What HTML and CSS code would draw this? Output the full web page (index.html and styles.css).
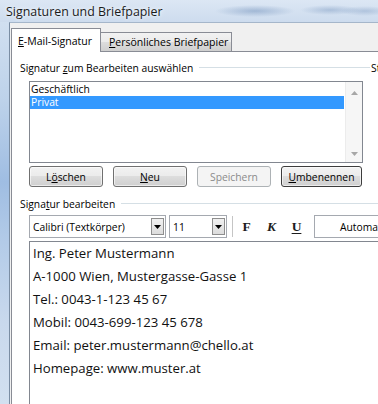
FILE: index.html
```html
<!DOCTYPE html>
<html lang="de">
<head>
<meta charset="utf-8">
<title>Signaturen und Briefpapier</title>
<link rel="stylesheet" href="styles.css">
</head>
<body>
<div class="window">
  <div class="titlebar"><span class="title">Signaturen und Briefpapier</span></div>
  <div class="frame">
    <div class="client">
      <div class="tabs">
        <div class="tab active"><u>E</u>-Mail-Signatur</div>
        <div class="tab"><u>P</u>ersönliches Briefpapier</div>
      </div>
      <div class="panel">
        <div class="top-row">
          <div class="sel-group">
            <div class="group-head"><span class="glabel">Signatur <u>z</u>um Bearbeiten auswählen</span><span class="rule"></span></div>
            <div class="listbox">
              <ul class="items">
                <li>Geschäftlich</li>
                <li class="selected">Privat</li>
              </ul>
              <div class="vscroll">
                <svg width="7" height="4" viewBox="0 0 7 4"><polygon points="0,4 3.5,0 7,4" fill="#a7a7a7"/></svg>
                <svg width="7" height="4" viewBox="0 0 7 4"><polygon points="0,0 3.5,4 7,0" fill="#a7a7a7"/></svg>
              </div>
            </div>
            <div class="buttons">
              <button class="btn">L<u>ö</u>schen</button>
              <button class="btn"><u>N</u>eu</button>
              <button class="btn" disabled>Speichern</button>
              <button class="btn focus wide"><u>U</u>mbenennen</button>
            </div>
          </div>
          <div class="std-group">
            <div class="group-head"><span class="glabel">Standardsignatur auswählen</span></div>
          </div>
        </div>
        <div class="edit-group">
          <div class="group-head"><span class="glabel">Signa<u>t</u>ur bearbeiten</span><span class="rule"></span></div>
          <div class="toolbar">
            <div class="combo font-combo">
              <span class="combo-text">Calibri (Textkörper)</span>
              <span class="drop"><svg width="7" height="4" viewBox="0 0 7 4"><polygon points="0,0 3.5,4 7,0" fill="#000"/></svg></span>
            </div>
            <div class="combo size-combo">
              <span class="combo-text">11</span>
              <span class="drop"><svg width="7" height="4" viewBox="0 0 7 4"><polygon points="0,0 3.5,4 7,0" fill="#000"/></svg></span>
            </div>
            <span class="tsep"></span>
            <span class="fmt bold">F</span>
            <span class="fmt italic">K</span>
            <span class="fmt under">U</span>
            <div class="combo color-combo"><span class="combo-text">Automatisch</span></div>
          </div>
          <div class="editor">
            <p>Ing. Peter Mustermann</p>
            <p>A-1000 Wien, Mustergasse-Gasse 1</p>
            <p>Tel.: 0043-1-123 45 67</p>
            <p>Mobil: 0043-699-123 45 678</p>
            <p>Email: peter.mustermann@chello.at</p>
            <p>Homepage: www.muster.at</p>
          </div>
        </div>
      </div>
    </div>
  </div>
</div>
</body>
</html>
```

FILE: styles.css
```css
* { box-sizing: border-box; }
html, body { margin: 0; padding: 0; }
body {
  width: 378px;
  height: 404px;
  overflow: hidden;
  font-family: "Open Sans", "Noto Sans", sans-serif;
  font-size: 10.3px;
  color: #000;
  background: #c5d6ea;
}
u { text-decoration: underline; text-underline-offset: 1px; }

.window {
  height: 404px;
  display: flex;
  flex-direction: column;
  background: linear-gradient(#d6e3f2, #bdd2ea 25%, #9fbde2 45%, #b3cbe8 60%, #c9d9ed 80%, #d2e0f0);
}
.titlebar {
  height: 22px;
  flex: none;
  display: flex;
  align-items: center;
  padding-left: 6px;
  background:
    radial-gradient(ellipse 40px 6px at 255px 11px, rgba(120,150,190,0.55), transparent),
    radial-gradient(ellipse 30px 5px at 330px 10px, rgba(120,150,190,0.45), transparent),
    radial-gradient(ellipse 25px 5px at 365px 11px, rgba(120,150,190,0.4), transparent),
    linear-gradient(#dce7f4, #cddcee);
}
.title {
  font-size: 12.4px;
  color: #1b1b1b;
  text-shadow: 0 0 5px #eef4fb, 0 0 3px #eef4fb;
}
.frame {
  flex: 1;
  display: flex;
  padding-left: 9px;
  min-height: 0;
}
.client {
  flex: 1;
  min-width: 0;
  background: #f0f0f0;
  border-left: 1px solid #7a8da3;
  border-top: 1px solid #a5b6ca;
  padding: 5px 0 0 1px;
  overflow: hidden;
}

/* tabs */
.tabs {
  display: flex;
  align-items: flex-end;
  height: 24px;
  margin-bottom: -1px;
}
.tab {
  height: 19px;
  width: 131px;
  margin-bottom: 1px;
  padding: 2px 0 0 8px;
  border: 1px solid #898c95;
  border-left: none;
  border-bottom: none;
  background: linear-gradient(#f2f2f2, #ebebeb 50%, #dddddd 50%, #cfcfcf);
  white-space: nowrap;
  font-size: 10.5px;
}
.tab.active {
  position: relative;
  z-index: 1;
  height: 24px;
  width: 90px;
  margin-bottom: 0;
  padding: 5px 0 0 6px;
  border-left: 1px solid #898c95;
  background: #fff;
}

/* panel */
.panel {
  width: 620px;
  height: 400px;
  background: #fff;
  border-top: 1px solid #898c95;
  border-left: 1px solid #898c95;
  padding: 8px 0 0 8px;
}
.top-row { display: flex; }
.sel-group { width: 350px; flex: none; }
.std-group { margin-left: 1px; white-space: nowrap; }
.group-head {
  display: flex;
  align-items: center;
  height: 15px;
  white-space: nowrap;
}
.rule {
  flex: 1;
  height: 1px;
  margin-left: 6px;
  background: #d5dfe5;
}

.listbox {
  margin: 6px 0 0 9px;
  width: 334px;
  height: 82px;
  border: 1px solid #828790;
  display: flex;
  padding-top: 1px;
}
.items {
  list-style: none;
  margin: 0;
  padding: 0;
  width: 314px;
  flex: none;
}
.items li {
  height: 13px;
  line-height: 13px;
  padding-left: 1px;
}
.items li.selected { background: #3399ff; color: #fff; }
.vscroll {
  margin-left: 1px;
  margin-top: -1px;
  flex: 1;
  background: #f6f6f6;
  border-left: 1px solid #ececec;
  display: flex;
  flex-direction: column;
  justify-content: space-between;
  align-items: center;
  padding: 9px 0 6px;
}
.vscroll svg { display: block; }

.buttons {
  display: flex;
  gap: 10px;
  margin: 3px 0 0 9px;
}
.btn {
  width: 74px;
  height: 21px;
  padding: 0;
  border: 1px solid #707070;
  border-radius: 3px;
  background: linear-gradient(#f2f2f2, #ebebeb 50%, #dddddd 50%, #cfcfcf);
  font: inherit;
  color: #000;
  box-shadow: inset 0 0 0 1px rgba(255,255,255,0.6);
}
.btn.wide { width: 81px; }
.btn.focus { border-color: #3d3d3d; }
.btn:disabled {
  border-color: #adb2b5;
  background: #f4f4f4;
  color: #8b8b8b;
  box-shadow: none;
}

.edit-group { margin-top: 9px; }
.toolbar {
  display: flex;
  align-items: center;
  margin: 4px 0 0 9px;
  height: 23px;
}
.combo {
  height: 23px;
  border: 1px solid #a5a9b0;
  background: #fff;
  display: flex;
  align-items: center;
  justify-content: space-between;
  padding: 0 1px 0 3px;
  flex: none;
}
.font-combo { width: 137px; }
.size-combo { width: 58px; margin-left: 3px; }
.combo-text { white-space: nowrap; }
.drop {
  width: 13px;
  height: 17px;
  border: 1px solid #8e8e8e;
  background: linear-gradient(#f1f1f1, #dcdcdc);
  display: flex;
  align-items: center;
  justify-content: center;
}
.drop svg { display: block; }
.tsep {
  width: 1px;
  height: 21px;
  margin: 0 1px 0 5px;
  background: #c5c5c5;
}
.fmt {
  width: 25px;
  text-align: center;
  font-family: "Liberation Serif", serif;
  font-weight: bold;
  font-size: 13.5px;
  color: #1d1d1d;
}
.fmt.italic { font-style: italic; }
.fmt.under { text-decoration: underline; text-underline-offset: 2px; }
.color-combo {
  width: 110px;
  margin-left: 5px;
  padding-left: 25px;
  justify-content: flex-start;
}

.editor {
  margin: 3px 0 0 9px;
  width: 560px;
  height: 200px;
  border: 1px solid #828790;
  background: #fff;
  padding: 0 0 0 3px;
  font-size: 13.2px;
  color: #111;
}
.editor p {
  margin: 0;
  height: 23px;
  line-height: 23px;
  white-space: nowrap;
}
```
